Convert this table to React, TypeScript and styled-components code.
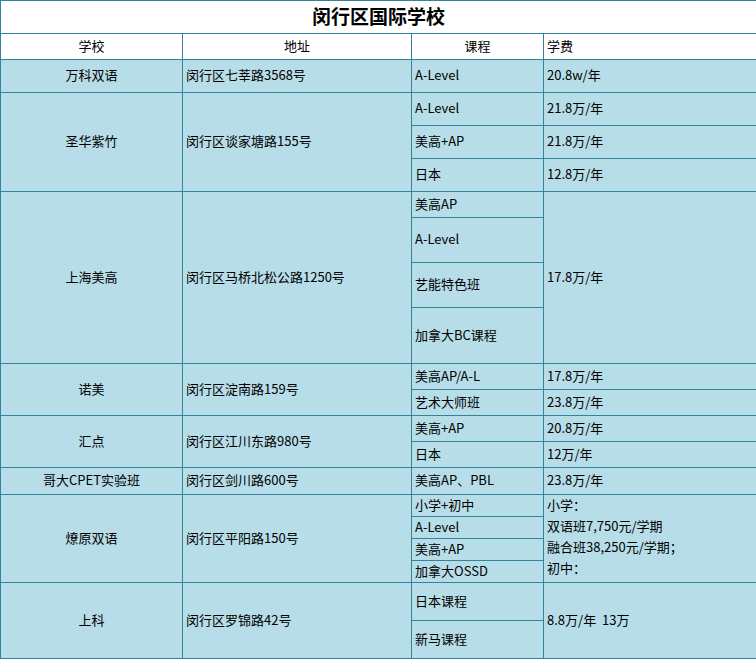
import React from "react";
import styled, { createGlobalStyle } from "styled-components";

const GlobalStyle = createGlobalStyle`
  html, body {
    margin: 0;
    padding: 0;
    background: #ffffff;
  }
  body {
    font-family: "Microsoft YaHei", "Noto Sans CJK SC", "Noto Sans", sans-serif;
  }
`;

const BORDER = "#31849b";
const CELL_BG = "#b7dde8";

const Table = styled.table`
  border-collapse: collapse;
  table-layout: fixed;
  width: 756px;
  font-size: 13px;
  color: #000;
`;

const Row = styled.tr<{ $h: number }>`
  height: ${(p) => p.$h}px;
`;

const Cell = styled.td<{ $align?: "left" | "center"; $white?: boolean }>`
  border: 1px solid ${BORDER};
  background: ${(p) => (p.$white ? "#ffffff" : CELL_BG)};
  text-align: ${(p) => p.$align ?? "left"};
  vertical-align: middle;
  padding: 0 3px 2px;
  line-height: 18px;
  white-space: pre;
  overflow: hidden;
`;

const TitleCell = styled(Cell)`
  font-size: 19px;
  font-weight: bold;
  text-align: center;
`;

const FeeLines = styled.div`
  line-height: 21px;
  margin-top: -3px;
`;

export default function App() {
  return (
    <>
      <GlobalStyle />
      <Table>
        <colgroup>
          <col style={{ width: 182 }} />
          <col style={{ width: 229 }} />
          <col style={{ width: 132 }} />
          <col style={{ width: 213 }} />
        </colgroup>
        <tbody>
          <Row $h={33}>
            <TitleCell colSpan={4} $white>
              闵行区国际学校
            </TitleCell>
          </Row>
          <Row $h={26}>
            <Cell $white $align="center">学校</Cell>
            <Cell $white $align="center">地址</Cell>
            <Cell $white $align="center">课程</Cell>
            <Cell $white>学费</Cell>
          </Row>

          <Row $h={33}>
            <Cell $align="center">万科双语</Cell>
            <Cell>闵行区七莘路3568号</Cell>
            <Cell>A-Level</Cell>
            <Cell>20.8w/年</Cell>
          </Row>

          <Row $h={33}>
            <Cell $align="center" rowSpan={3}>圣华紫竹</Cell>
            <Cell rowSpan={3}>闵行区谈家塘路155号</Cell>
            <Cell>A-Level</Cell>
            <Cell>21.8万/年</Cell>
          </Row>
          <Row $h={33}>
            <Cell>美高+AP</Cell>
            <Cell>21.8万/年</Cell>
          </Row>
          <Row $h={33}>
            <Cell>日本</Cell>
            <Cell>12.8万/年</Cell>
          </Row>

          <Row $h={26}>
            <Cell $align="center" rowSpan={4}>上海美高</Cell>
            <Cell rowSpan={4}>闵行区马桥北松公路1250号</Cell>
            <Cell>美高AP</Cell>
            <Cell rowSpan={4}>17.8万/年</Cell>
          </Row>
          <Row $h={45}>
            <Cell>A-Level</Cell>
          </Row>
          <Row $h={45}>
            <Cell>艺能特色班</Cell>
          </Row>
          <Row $h={56}>
            <Cell>加拿大BC课程</Cell>
          </Row>

          <Row $h={26}>
            <Cell $align="center" rowSpan={2}>诺美</Cell>
            <Cell rowSpan={2}>闵行区淀南路159号</Cell>
            <Cell>美高AP/A-L</Cell>
            <Cell>17.8万/年</Cell>
          </Row>
          <Row $h={26}>
            <Cell>艺术大师班</Cell>
            <Cell>23.8万/年</Cell>
          </Row>

          <Row $h={26}>
            <Cell $align="center" rowSpan={2}>汇点</Cell>
            <Cell rowSpan={2}>闵行区江川东路980号</Cell>
            <Cell>美高+AP</Cell>
            <Cell>20.8万/年</Cell>
          </Row>
          <Row $h={26}>
            <Cell>日本</Cell>
            <Cell>12万/年</Cell>
          </Row>

          <Row $h={27}>
            <Cell $align="center">哥大CPET实验班</Cell>
            <Cell>闵行区剑川路600号</Cell>
            <Cell>美高AP、PBL</Cell>
            <Cell>23.8万/年</Cell>
          </Row>

          <Row $h={22}>
            <Cell $align="center" rowSpan={4}>燎原双语</Cell>
            <Cell rowSpan={4}>闵行区平阳路150号</Cell>
            <Cell>小学+初中</Cell>
            <Cell rowSpan={4}>
              <FeeLines>
                <div>小学：</div>
                <div>双语班7,750元/学期</div>
                <div>融合班38,250元/学期；</div>
                <div>初中：</div>
              </FeeLines>
            </Cell>
          </Row>
          <Row $h={22}>
            <Cell>A-Level</Cell>
          </Row>
          <Row $h={22}>
            <Cell>美高+AP</Cell>
          </Row>
          <Row $h={22}>
            <Cell>加拿大OSSD</Cell>
          </Row>

          <Row $h={38}>
            <Cell $align="center" rowSpan={2}>上科</Cell>
            <Cell rowSpan={2}>闵行区罗锦路42号</Cell>
            <Cell>日本课程</Cell>
            <Cell rowSpan={2}>8.8万/年  13万</Cell>
          </Row>
          <Row $h={38}>
            <Cell>新马课程</Cell>
          </Row>
        </tbody>
      </Table>
    </>
  );
}
